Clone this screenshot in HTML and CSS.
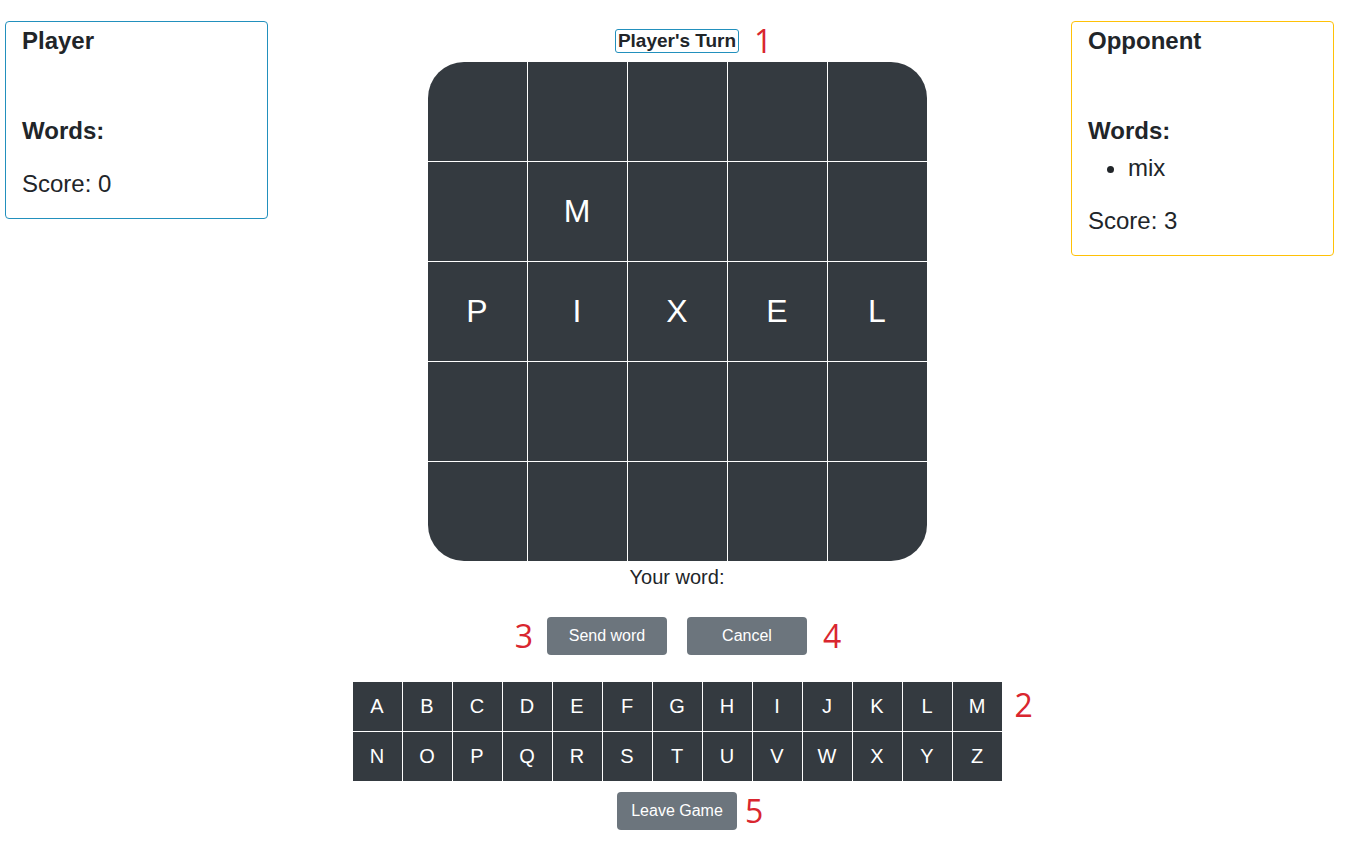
FILE: index.html
```html
<!DOCTYPE html>
<html lang="en">
<head>
<meta charset="utf-8">
<title>Word Game</title>
<link rel="stylesheet" href="styles.css">
</head>
<body>
<div class="page">
  <section class="card card-player">
    <h3 class="card-title">Player</h3>
    <h3 class="words-title">Words:</h3>
    <ul class="words"></ul>
    <p class="score">Score: 0</p>
  </section>

  <main class="center">
    <div class="annotated">
      <div class="turn">Player's Turn</div>
      <span class="anno anno-1">1</span>
    </div>

    <div class="board">
      <div class="cell"></div><div class="cell"></div><div class="cell"></div><div class="cell"></div><div class="cell"></div>
      <div class="cell"></div><div class="cell">M</div><div class="cell"></div><div class="cell"></div><div class="cell"></div>
      <div class="cell">P</div><div class="cell">I</div><div class="cell">X</div><div class="cell">E</div><div class="cell">L</div>
      <div class="cell"></div><div class="cell"></div><div class="cell"></div><div class="cell"></div><div class="cell"></div>
      <div class="cell"></div><div class="cell"></div><div class="cell"></div><div class="cell"></div><div class="cell"></div>
    </div>

    <div class="your-word">Your word:</div>

    <div class="actions">
      <div class="annotated">
        <span class="anno anno-3">3</span>
        <button class="btn">Send word</button>
      </div>
      <div class="annotated">
        <button class="btn">Cancel</button>
        <span class="anno anno-4">4</span>
      </div>
    </div>

    <div class="annotated keyboard-wrap">
      <div class="keyboard">
        <button class="key">A</button><button class="key">B</button><button class="key">C</button><button class="key">D</button><button class="key">E</button><button class="key">F</button><button class="key">G</button><button class="key">H</button><button class="key">I</button><button class="key">J</button><button class="key">K</button><button class="key">L</button><button class="key">M</button>
        <button class="key">N</button><button class="key">O</button><button class="key">P</button><button class="key">Q</button><button class="key">R</button><button class="key">S</button><button class="key">T</button><button class="key">U</button><button class="key">V</button><button class="key">W</button><button class="key">X</button><button class="key">Y</button><button class="key">Z</button>
      </div>
      <span class="anno anno-2">2</span>
    </div>

    <div class="annotated leave-wrap">
      <button class="btn">Leave Game</button>
      <span class="anno anno-5">5</span>
    </div>
  </main>

  <section class="card card-opponent">
    <h3 class="card-title">Opponent</h3>
    <h3 class="words-title">Words:</h3>
    <ul class="words"><li>mix</li></ul>
    <p class="score">Score: 3</p>
  </section>
</div>
</body>
</html>
```

FILE: styles.css
```css
* { box-sizing: border-box; }

body {
  margin: 0;
  background: #fff;
  color: #212529;
  font-family: "Liberation Sans", Arial, sans-serif;
}

.page {
  display: grid;
  grid-template-columns: 263px 1fr 263px;
  align-items: start;
  padding: 21px 11px 0 5px;
}

/* side cards */
.card {
  display: flex;
  flex-direction: column;
  border: 1px solid #2290bd;
  border-radius: 4px;
  padding: 0 16px;
}
.card-opponent { border-color: #ffc107; }

.card-title,
.words-title {
  margin: 4px 0 0;
  font-size: 24px;
  line-height: 29px;
  font-weight: 700;
}
.words-title { margin-top: 61px; }

.words {
  margin: 8px 0 0;
  padding-left: 40px;
}
.words li {
  font-size: 24px;
  line-height: 29px;
  margin-bottom: 8px;
}

.score {
  margin: 16px 0 20px;
  font-size: 24px;
  line-height: 29px;
}

/* center column */
.center {
  display: flex;
  flex-direction: column;
  align-items: center;
  padding: 8px 0 0 15px;
}

.annotated { position: relative; }

.anno {
  position: absolute;
  top: 50%;
  transform: translateY(-50%);
  color: #d9262f;
  font-family: "Open Sans", "Noto Sans", sans-serif;
  font-size: 32px;
  line-height: 1;
  font-weight: 400;
}
.anno-1 { left: calc(100% + 15px); }
.anno-3 { right: calc(100% + 14px); }
.anno-4 { left: calc(100% + 16px); }
.anno-2 { left: calc(100% + 13px); top: 23px; }
.anno-5 { left: calc(100% + 8px); }

.turn {
  font-size: 19px;
  font-weight: 700;
  line-height: 22px;
  border: 1px solid #2290bd;
  border-radius: 3px;
  padding: 0 2px;
}

.board {
  margin-top: 9px;
  display: grid;
  grid-template-columns: repeat(5, 99px);
  grid-auto-rows: 99px;
  gap: 1px;
  background: #fff;
  border-radius: 36px;
  overflow: hidden;
}
.cell {
  background: #343a40;
  color: #fff;
  font-size: 32px;
  display: flex;
  align-items: center;
  justify-content: center;
}

.your-word {
  margin-top: 4px;
  font-size: 20px;
  line-height: 24px;
}

.actions {
  margin-top: 28px;
  display: flex;
  gap: 20px;
}

.btn {
  width: 120px;
  height: 38px;
  border: 0;
  border-radius: 4px;
  background: #6c757d;
  color: #fff;
  font-family: "Liberation Sans", Arial, sans-serif;
  font-size: 16px;
  padding: 0;
}

.keyboard-wrap { margin-top: 27px; }
.keyboard {
  display: grid;
  grid-template-columns: repeat(13, 49px);
  grid-auto-rows: 49px;
  gap: 1px;
}
.key {
  border: 0;
  padding: 0;
  background: #343a40;
  color: #fff;
  font-family: "Liberation Sans", Arial, sans-serif;
  font-size: 20px;
}

.leave-wrap { margin-top: 11px; }
```
